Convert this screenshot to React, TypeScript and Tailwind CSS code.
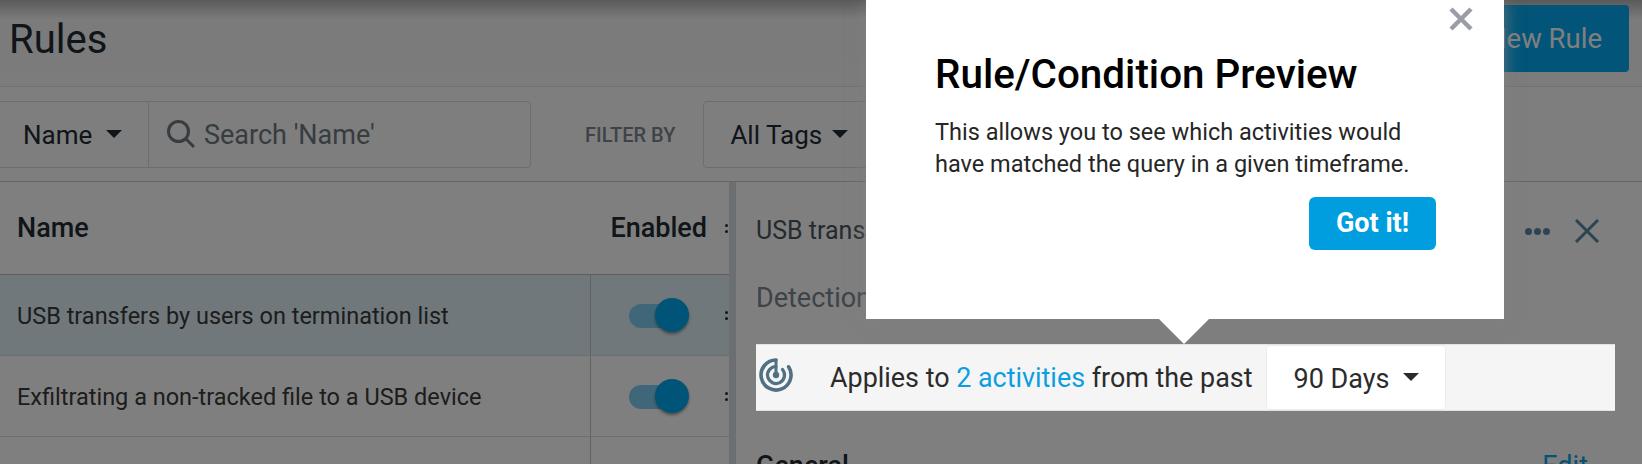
import React from "react";

const font = { fontFamily: "Roboto, 'Liberation Sans', sans-serif" };

function Caret({ className = "" }: { className?: string }) {
  return (
    <svg width="16" height="8" viewBox="0 0 16 8" className={className}>
      <path d="M0 0h16L8 8z" fill="currentColor" />
    </svg>
  );
}

function Toggle() {
  return (
    <div className="relative h-[34px] w-[60px]">
      <div className="absolute left-0 top-[6px] h-[24px] w-[52px] rounded-full bg-[#7fcff2]" />
      <div className="absolute left-[26px] top-0 h-[34px] w-[34px] rounded-full bg-[#00a8f0] shadow-[0_2px_3px_rgba(0,0,0,0.4)]" />
    </div>
  );
}

function Handle() {
  return (
    <div className="flex flex-col gap-[3px]">
      <i className="h-[3px] w-[3px] rounded-full bg-[#2a2a2a]" />
      <i className="h-[3px] w-[3px] rounded-full bg-[#2a2a2a]" />
    </div>
  );
}

function Row({ text, selected }: { text: string; selected?: boolean }) {
  return (
    <div className={`flex h-[81px] border-b border-[#dcdcdc] ${selected ? "bg-[#e0f1f8]" : ""}`}>
      <div className="flex w-[591px] items-center border-r border-[#c4c4c4] pl-[17px] pt-[3px] text-[23.5px] text-[#3a3a3a]">
        {text}
      </div>
      <div className="flex flex-1 items-center justify-between pl-[38px] pr-[1px]">
        <Toggle />
        <Handle />
      </div>
    </div>
  );
}

function Radar() {
  return (
    <svg width="36" height="36" viewBox="0 0 36 36" fill="none" stroke="#4f7183" strokeLinecap="round">
      <path d="M18 3A15 15 0 1 0 30.6 9.8" strokeWidth="3.6" />
      <path d="M18 9.5A8.5 8.5 0 1 0 24.5 12.5" strokeWidth="3.2" />
      <path d="M18 3V18" strokeWidth="3" />
      <circle cx="18" cy="18" r="3.2" fill="#4f7183" stroke="none" />
    </svg>
  );
}

export default function App() {
  return (
    <div style={font} className="relative h-[464px] w-[1642px] overflow-hidden bg-white text-[#1f2a33]">
      {/* Page under the dimmed layer */}
      <header className="flex h-[87px] items-start justify-between border-b border-[#e2e2e2] bg-gradient-to-b from-[#b4b4b4] via-[#f6f6f6] via-[22%] to-[#f8f8f8] pr-[13px]">
        <h1 className="pl-[9px] pt-[15px] text-[40px] font-normal leading-[50px]">Rules</h1>
        <button className="mt-[5px] flex h-[67px] w-[230px] items-center justify-end rounded bg-[#04aaf0] pr-[27px] pt-[1px] text-[27.5px] font-normal text-white">
          New Rule
        </button>
      </header>

      <div className="flex h-[95px] items-center border-b border-[#cfcfcf] bg-[#fcfcfc]">
        <div className="flex h-[67px] w-[531px] items-center rounded-r border border-l-0 border-[#dcdcdc]">
          <div className="flex h-full w-[149px] items-center gap-[14px] border-r border-[#dcdcdc] pl-[23px] text-[26px]">
            <span className="pt-[2px]">Name</span> <Caret className="-mt-[1px] text-[#1f2a33]" />
          </div>
          <div className="flex items-center gap-[8px] pl-[17px] text-[27px] text-[#6f7880]">
            <svg width="30" height="30" viewBox="0 0 30 30" fill="none" stroke="#6f7880" strokeWidth="3">
              <circle cx="12.5" cy="12.5" r="10" />
              <path d="M20 20l8 8" />
            </svg>
            <span className="pt-[3px]">Search 'Name'</span>
          </div>
        </div>
        <span className="ml-[54px] pt-[2px] text-[20px] font-medium text-[#7c8790]">FILTER BY</span>
        <div className="ml-[28px] flex h-[67px] w-[190px] items-center gap-[10px] rounded border border-[#dcdcdc] pl-[26px] text-[26px]">
          <span className="pt-[2px]">All Tags</span> <Caret />
        </div>
      </div>

      <div className="flex">
        <section className="w-[729px]">
          <div className="flex h-[93px] items-center justify-between border-b border-[#bfbfbf] pl-[17px] pr-[1px] text-[27px] font-medium">
            <span>Name</span>
            <span className="flex items-center gap-[18px]">
              Enabled
              <Handle />
            </span>
          </div>
          <Row text="USB transfers by users on termination list" selected />
          <Row text="Exfiltrating a non-tracked file to a USB device" />
          <div className="flex h-[40px]">
            <div className="w-[591px] border-r border-[#c4c4c4]" />
          </div>
        </section>
        <div className="h-[283px] w-[7px] bg-[#d8dfe3]" />
        <section className="flex-1 pl-[20px] pr-[54px]">
          <div className="flex h-[93px] items-center justify-between pt-[5px] text-[25px] text-[#4a5560]">
            <span>USB transfers by users on termination list</span>
            <span className="-mr-[12px] flex items-center gap-[24px]">
              <span className="flex gap-[2px]">
                <i className="h-[7px] w-[7px] rounded-full bg-[#5a8aa5]" />
                <i className="h-[7px] w-[7px] rounded-full bg-[#5a8aa5]" />
                <i className="h-[7px] w-[7px] rounded-full bg-[#5a8aa5]" />
              </span>
              <svg width="26" height="24" viewBox="0 0 26 24" stroke="#5a8aa5" strokeWidth="3" fill="none">
                <path d="M2 1l22 22M24 1L2 23" />
              </svg>
            </span>
          </div>
          <p className="mt-[8px] text-[27px] leading-[30px] text-[#7c8790]">Detection</p>
          <div className="mt-[137px] flex items-center justify-between text-[27px] font-medium leading-[32px]">
            <span>General</span>
            <span className="font-normal text-[#0aa5e6]">Edit</span>
          </div>
        </section>
      </div>

      {/* Dimming layer */}
      <div className="absolute inset-0 bg-black/50" />

      {/* Highlighted line */}
      <div className="absolute left-[756px] top-[344px] flex h-[67px] w-[859px] items-center border-y border-[#e2e2e2] bg-[#f5f5f5]">
        <span className="-mt-[6px] ml-[2px] flex"><Radar /></span>
        <span className="ml-[36px] whitespace-nowrap pt-[2px] text-[26.9px] text-[#2b2b2b]">
          Applies to <span className="text-[#0b9fe0]">2 activities</span> from the past
        </span>
        <div className="ml-[14px] flex h-[65px] w-[180px] items-center gap-[14px] rounded-sm border border-[#ececec] bg-white pl-[26px] text-[27px] text-[#2b2b2b]">
          <span className="pt-[4px]">90 Days</span> <Caret className="-mt-[2px]" />
        </div>
      </div>

      {/* Tour popover */}
      <div className="absolute left-[866px] top-0 h-[319px] w-[638px] bg-white pl-[69px] pr-[68px] pt-[48px] text-black shadow-[0_0_16px_rgba(127,127,127,0.8)]">
        <svg width="24" height="24" viewBox="0 0 24 24" className="absolute left-[583px] top-[7px]" stroke="#9a9ca8" strokeWidth="4.5" fill="none">
          <path d="M2 2l20 20M22 2L2 22" />
        </svg>
        <h2 className="whitespace-nowrap text-[40.4px] font-medium leading-[54px]">Rule/Condition Preview</h2>
        <p className="mt-[14px] text-[23.5px] leading-[32px] text-[#262626]">
          This allows you to see which activities would
          <br />
          have matched the query in a given timeframe.
        </p>
        <div className="mt-[17px] flex justify-end">
          <button className="h-[53px] w-[127px] rounded-[6px] bg-[#009ede] text-[27px] font-bold text-white">Got it!</button>
        </div>
        <div className="absolute left-[293px] top-[319px] h-0 w-0 border-x-[25px] border-t-[25px] border-x-transparent border-t-white" />
      </div>
    </div>
  );
}
